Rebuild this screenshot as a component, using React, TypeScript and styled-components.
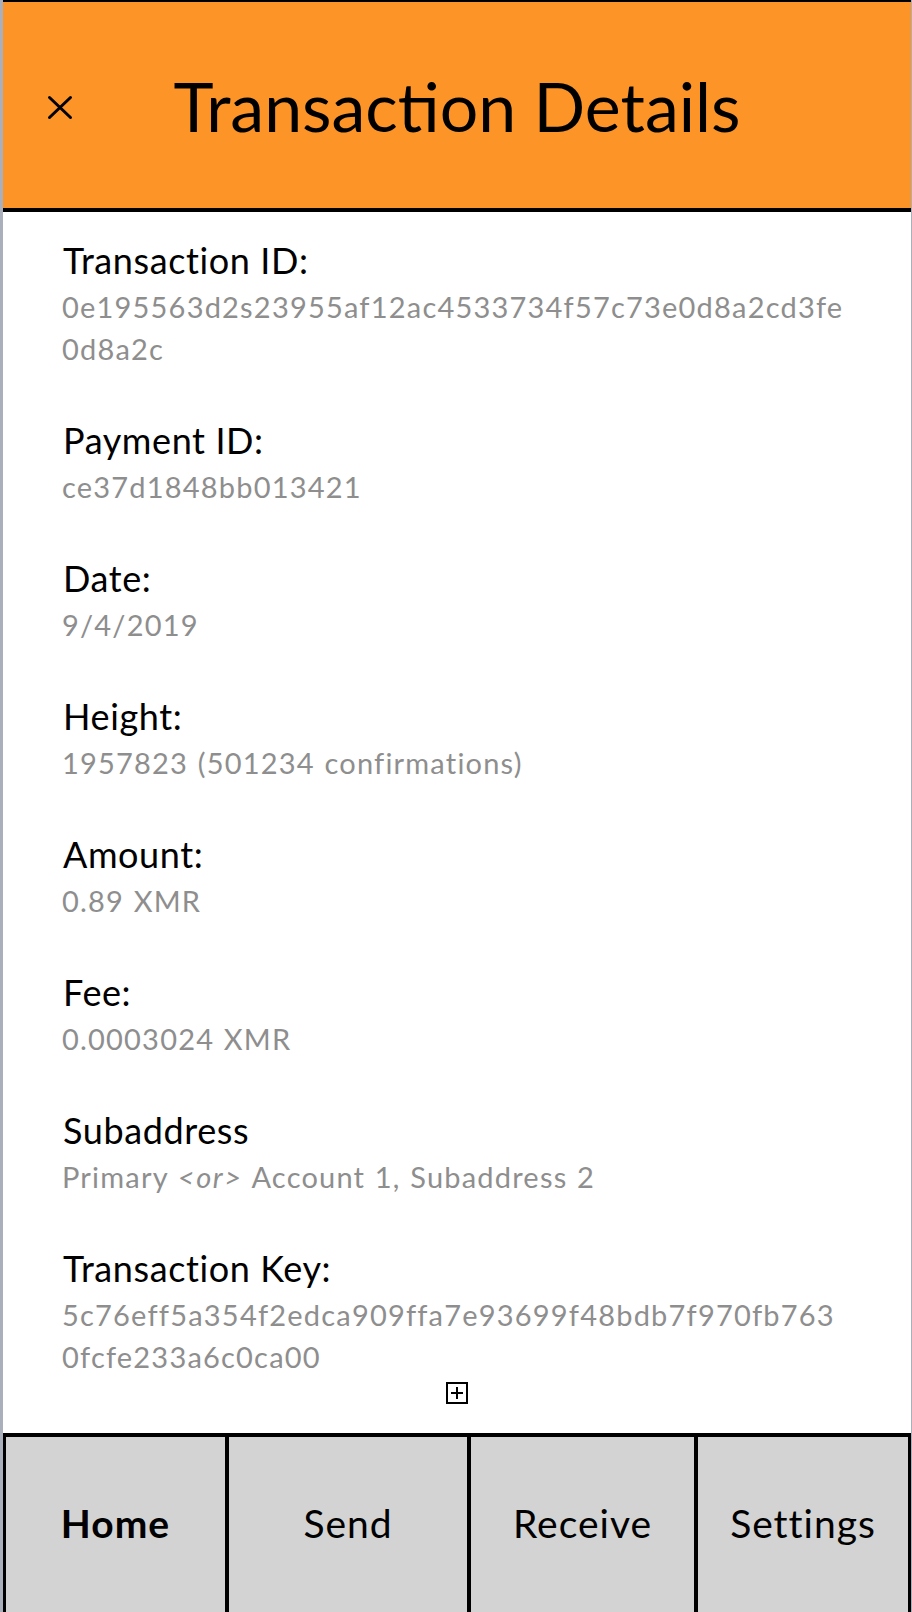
import React from "react";
import styled, { createGlobalStyle } from "styled-components";

const GlobalStyle = createGlobalStyle`
  html, body {
    margin: 0;
    padding: 0;
    background: #ffffff;
  }
  body {
    font-family: Lato, "Open Sans", sans-serif;
  }
`;

type Detail = {
  label: string;
  value: React.ReactNode;
};

const details: Detail[] = [
  { label: "Transaction ID:", value: "0e195563d2s23955af12ac4533734f57c73e0d8a2cd3fe0d8a2c" },
  { label: "Payment ID:", value: "ce37d1848bb013421" },
  { label: "Date:", value: "9/4/2019" },
  { label: "Height:", value: "1957823 (501234 confirmations)" },
  { label: "Amount:", value: "0.89 XMR" },
  { label: "Fee:", value: "0.0003024 XMR" },
  {
    label: "Subaddress",
    value: (
      <>
        Primary <em>&lt;or&gt;</em> Account 1, Subaddress 2
      </>
    ),
  },
  { label: "Transaction Key:", value: "5c76eff5a354f2edca909ffa7e93699f48bdb7f970fb7630fcfe233a6c0ca00" },
];

const tabs = ["Home", "Send", "Receive", "Settings"];

export default function App() {
  return (
    <>
      <GlobalStyle />
      <Screen>
        <Header>
          <CloseButton aria-label="Close">
            <svg width="26" height="25" viewBox="0 0 26 25">
              <path d="M2.5 2.5 L23.5 22.5 M23.5 2.5 L2.5 22.5" stroke="#000" strokeWidth="3" strokeLinecap="round" fill="none" />
            </svg>
          </CloseButton>
          <Title>Transaction Details</Title>
        </Header>

        <Content>
          {details.map((d) => (
            <Section key={d.label}>
              <Label>{d.label}</Label>
              <Value>{d.value}</Value>
            </Section>
          ))}
          <ExpandIcon aria-label="Expand">
            <svg width="22" height="22" viewBox="0 0 22 22">
              <rect x="1" y="1" width="20" height="20" fill="#fff" stroke="#000" strokeWidth="2" />
              <path d="M11 5 V17 M5 11 H17" stroke="#000" strokeWidth="2" fill="none" />
            </svg>
          </ExpandIcon>
        </Content>

        <TabBar>
          {tabs.map((t, i) => (
            <Tab key={t} $active={i === 0}>
              {t}
            </Tab>
          ))}
        </TabBar>
      </Screen>
    </>
  );
}

const Screen = styled.div`
  width: 912px;
  height: 1612px;
  box-sizing: border-box;
  display: flex;
  flex-direction: column;
  border-left: 3px solid #a9b0bb;
  border-right: 1px solid #a9b0bb;
  background: #ffffff;
  overflow: hidden;
`;

const Header = styled.header`
  flex: 0 0 auto;
  height: 212px;
  box-sizing: border-box;
  display: grid;
  grid-template-columns: 1fr auto 1fr;
  align-items: center;
  background: #fd9428;
  border-top: 2px solid #000;
  border-bottom: 4px solid #000;
`;

const CloseButton = styled.div`
  justify-self: start;
  display: flex;
  padding-left: 44px;
  margin-top: 4px;
`;

const Title = styled.h1`
  margin: 0;
  font-family: Lato, sans-serif;
  font-weight: 400;
  font-size: 68px;
  line-height: 1;
  color: #000;
  white-space: nowrap;
  margin-top: 2px;
`;

const Content = styled.main`
  flex: 1 1 auto;
  display: flex;
  flex-direction: column;
  padding: 28px 59px 0 59px;
  gap: 50px;
`;

const Section = styled.section`
  display: flex;
  flex-direction: column;
  gap: 6px;
`;

const Label = styled.div`
  font-size: 36px;
  line-height: 40px;
  letter-spacing: 0.6px;
  color: #000;
  padding-left: 1px;
`;

const Value = styled.div`
  font-size: 29px;
  line-height: 42px;
  letter-spacing: 1.2px;
  word-spacing: 1px;
  color: #8e8e8e;
  word-break: break-all;

  em {
    font-style: italic;
    letter-spacing: 1.6px;
  }
`;

const ExpandIcon = styled.div`
  align-self: center;
  display: flex;
  margin-top: -46px;
`;

const TabBar = styled.nav`
  flex: 0 0 175px;
  display: grid;
  grid-template-columns: 219fr 238fr 223fr 210fr;
  column-gap: 4px;
  background: #000;
  border-top: 4px solid #000;
  border-left: 3px solid #000;
  border-right: 3px solid #000;
`;

const Tab = styled.div<{ $active?: boolean }>`
  display: flex;
  align-items: center;
  justify-content: center;
  background: #d3d3d3;
  font-size: 39px;
  letter-spacing: 1px;
  font-weight: ${(p) => (p.$active ? 700 : 400)};
  color: #000;
  padding-bottom: 4px;
`;
